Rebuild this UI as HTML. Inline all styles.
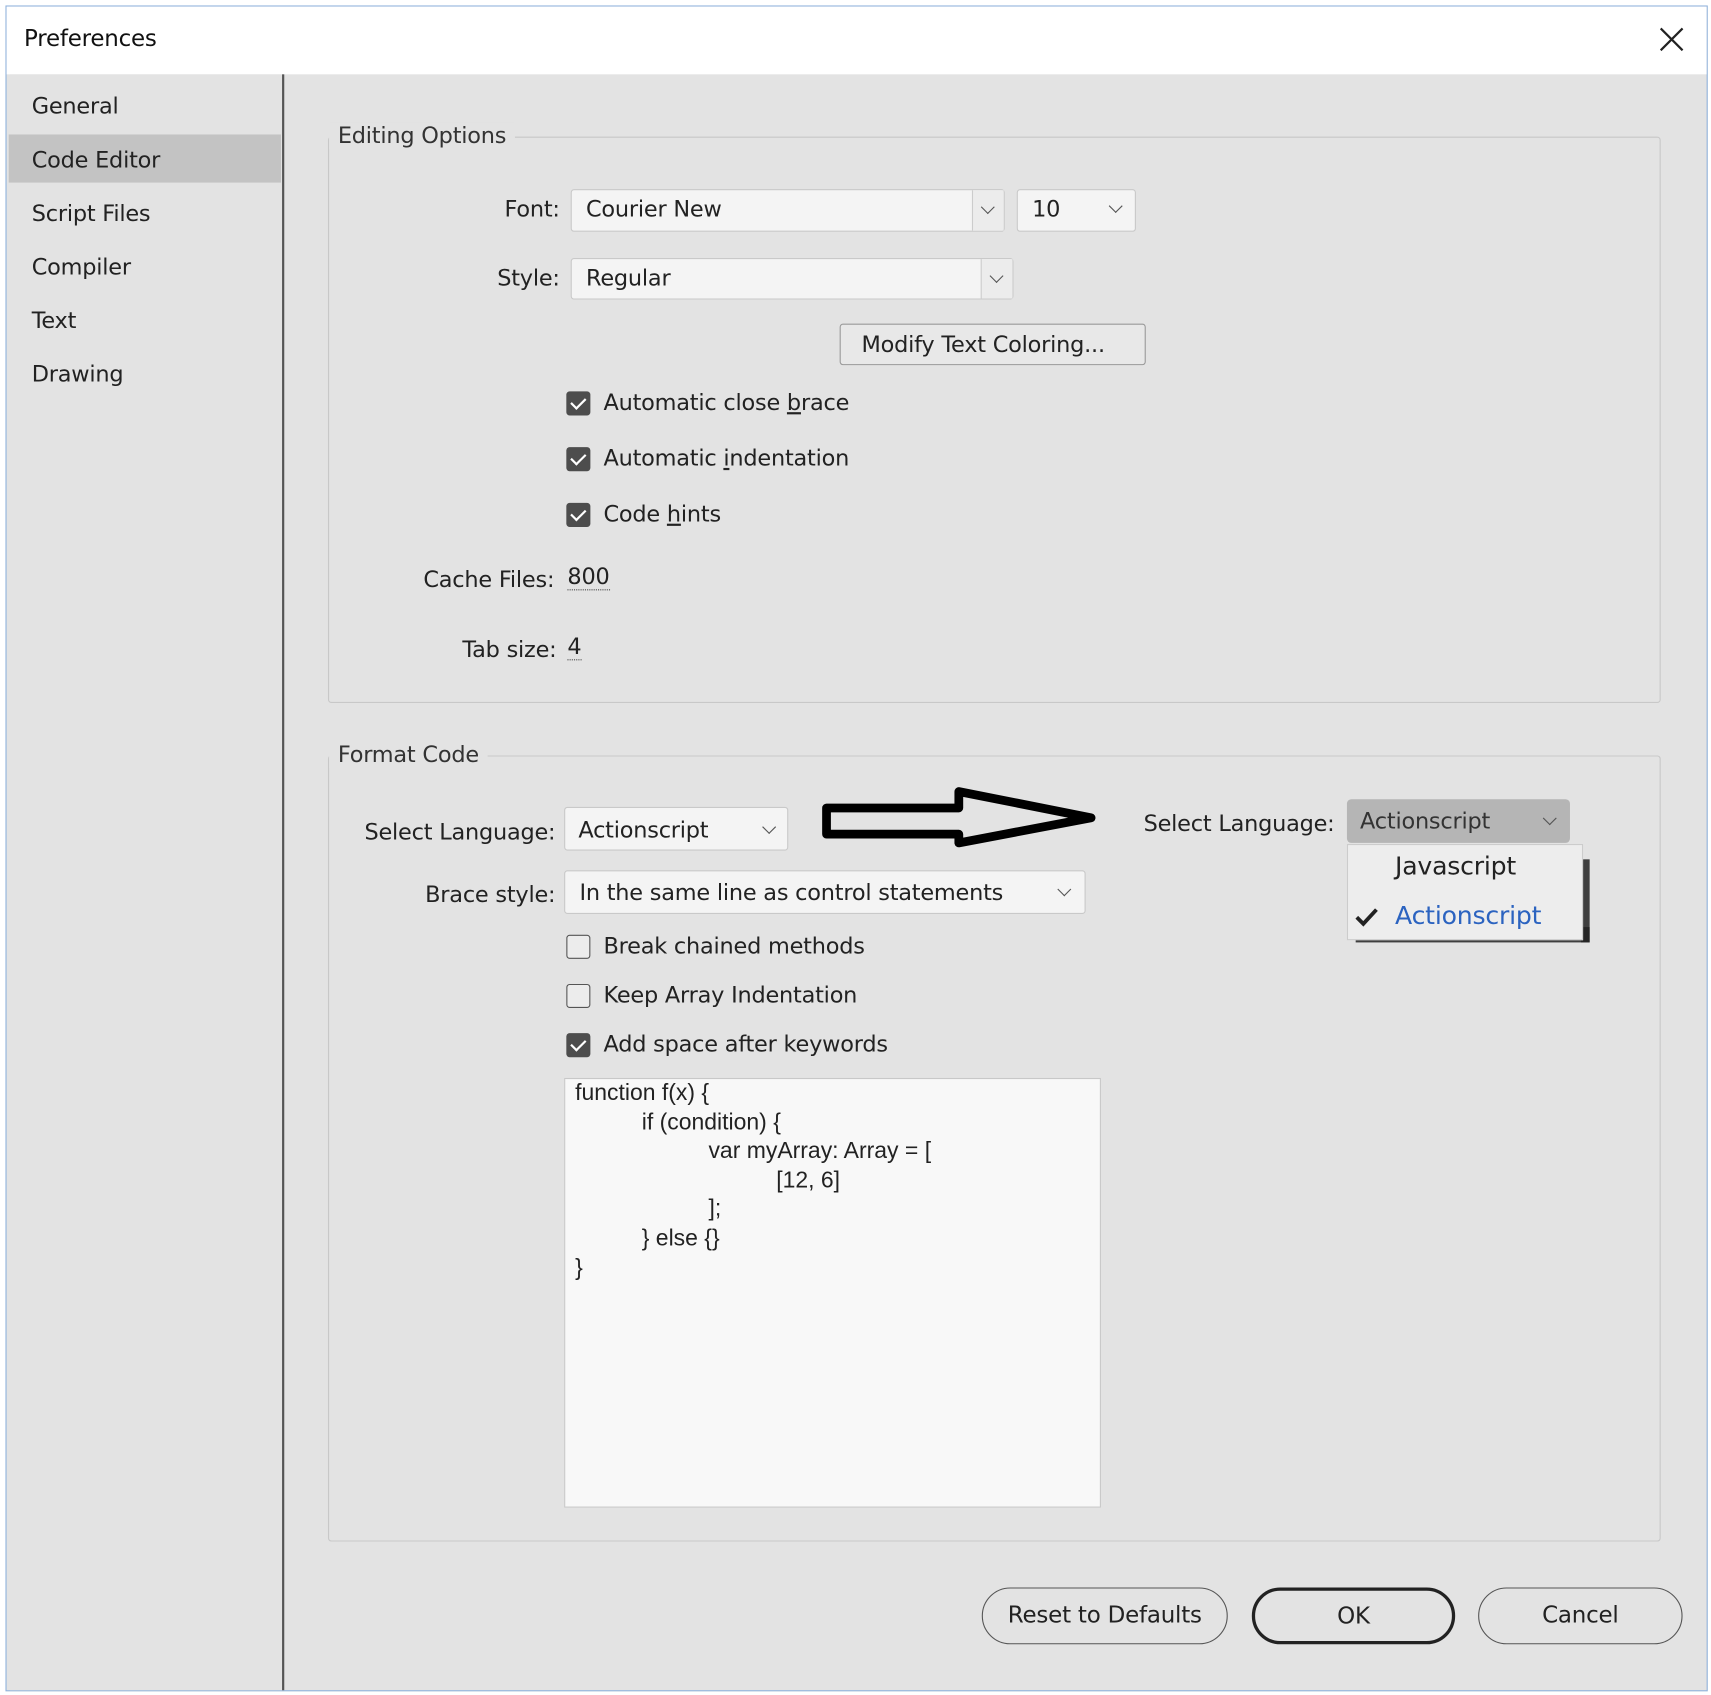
<!DOCTYPE html>
<html><head><meta charset="utf-8"><style>
html,body{margin:0;padding:0;background:#fff;width:1711px;height:1695px;overflow:hidden}
#w{position:absolute;left:0;top:0;width:1565px;height:1550px;transform:scale(1.09329);transform-origin:0 0;font-family:"DejaVu Sans","Liberation Sans",sans-serif;color:#222;font-size:20.5px;letter-spacing:-0.2px}
.a{position:absolute;white-space:nowrap}
.win{position:absolute;left:5px;top:5px;width:1555px;height:1540px;border:1px solid #8fb2dc;background:#e3e3e3}
.title{position:absolute;left:0;top:0;width:1555px;height:62px;background:#fff}
.side{position:absolute;left:3px;top:62px;width:249px;height:1478px;background:#e3e3e3;border-right:2px solid #555}
.grp{position:absolute;border:1px solid #c8c8c8;border-radius:3px}
.glab{position:absolute;background:#e3e3e3;padding:0 8px;color:#333}
.cb{position:absolute;background:#f4f4f4;border:1px solid #c9c9c9;border-radius:3px;box-sizing:border-box}
.dd{position:absolute;top:0;right:0;height:100%;width:28px;border-left:1px solid #ccc;background:#ececec}
.chev{position:absolute;width:8px;height:8px;border-right:1.6px solid #555;border-bottom:1.6px solid #555;transform:rotate(45deg)}
.chk{position:absolute;width:22px;height:22px;border-radius:3px;box-sizing:border-box}
.on{background:#4d4d4d}
.on::after{content:"";position:absolute;left:7px;top:3px;width:6px;height:11px;border-right:2.5px solid #fff;border-bottom:2.5px solid #fff;transform:rotate(45deg)}
.off{border:1.5px solid #555;background:#ececec}
.btn{position:absolute;border:1.5px solid #555;border-radius:26px;box-sizing:border-box;text-align:center;line-height:48px;font-size:21px}
u{text-decoration:underline}
</style></head><body><div id="w">
<div class="win">
 <div class="title"></div>
 <div class="side"></div>
</div>
<div class="a" style="left:22px;top:23px;font-size:21px;color:#111">Preferences</div>
<svg class="a" style="left:1517px;top:24px" width="24" height="24"><path d="M2 2L22 22M22 2L2 22" stroke="#222" stroke-width="2"/></svg>
<div class="a" style="left:8px;top:123px;width:249px;height:44px;background:#c3c3c3"></div>
<div class="a" style="left:29px;top:85px">General</div>
<div class="a" style="left:29px;top:134px">Code Editor</div>
<div class="a" style="left:29px;top:183px">Script Files</div>
<div class="a" style="left:29px;top:232px">Compiler</div>
<div class="a" style="left:29px;top:281px">Text</div>
<div class="a" style="left:29px;top:330px">Drawing</div>

<div class="grp" style="left:300px;top:125px;width:1217px;height:516px"></div>
<div class="glab" style="left:301px;top:112px">Editing Options</div>
<div class="a" style="left:400px;top:179px;width:112px;text-align:right">Font:</div>
<div class="cb" style="left:522px;top:173px;width:397px;height:39px"><div class="dd"><div class="chev" style="left:9px;top:11px"></div></div></div>
<div class="a" style="left:536px;top:179px">Courier New</div>
<div class="cb" style="left:930px;top:173px;width:109px;height:39px"></div><div class="chev a" style="left:1016px;top:184px"></div>
<div class="a" style="left:944px;top:179px">10</div>
<div class="a" style="left:400px;top:242px;width:112px;text-align:right">Style:</div>
<div class="cb" style="left:522px;top:236px;width:405px;height:38px"><div class="dd"><div class="chev" style="left:9px;top:11px"></div></div></div>
<div class="a" style="left:536px;top:242px">Regular</div>
<div class="cb" style="left:768px;top:296px;width:280px;height:38px;background:#e8e8e8;border-color:#999"></div>
<div class="a" style="left:788px;top:303px">Modify Text Coloring...</div>
<div class="chk on" style="left:518px;top:358px"></div><div class="a" style="left:552px;top:356px">Automatic close <u>b</u>race</div>
<div class="chk on" style="left:518px;top:409px"></div><div class="a" style="left:552px;top:407px">Automatic <u>i</u>ndentation</div>
<div class="chk on" style="left:518px;top:460px"></div><div class="a" style="left:552px;top:458px">Code <u>h</u>ints</div>
<div class="a" style="left:300px;top:518px;width:207px;text-align:right">Cache Files:</div>
<div class="a" style="left:519px;top:515px;border-bottom:1.5px dotted #444">800</div>
<div class="a" style="left:300px;top:582px;width:209px;text-align:right">Tab size:</div>
<div class="a" style="left:519px;top:579px;border-bottom:1.5px dotted #444">4</div>

<div class="grp" style="left:300px;top:691px;width:1217px;height:717px"></div>
<div class="glab" style="left:301px;top:678px">Format Code</div>
<div class="a" style="left:300px;top:749px;width:208px;text-align:right">Select Language:</div>
<div class="cb" style="left:516px;top:738px;width:205px;height:40px"></div><div class="chev a" style="left:699px;top:752px"></div>
<div class="a" style="left:529px;top:747px">Actionscript</div>
<svg class="a" style="left:0;top:0" width="1100" height="800"><polygon points="756,739 877,739 877,724 998,748 877,771 877,763 756,763" fill="#e3e3e3" stroke="#000" stroke-width="8" stroke-linejoin="round"/></svg>
<div class="a" style="left:1046px;top:741px">Select Language:</div>
<div class="a" style="left:1232px;top:731px;width:204px;height:40px;background:#b5b5b5;border-radius:4px"></div><div class="chev a" style="left:1413px;top:744px"></div>
<div class="a" style="left:1244px;top:739px;color:#333">Actionscript</div>
<div class="a" style="left:1240px;top:848px;width:214px;height:14px;background:#222;opacity:0.85"></div>
<div class="a" style="left:1446px;top:786px;width:8px;height:76px;background:#222;opacity:0.85"></div>
<div class="a" style="left:1232px;top:772px;width:216px;height:88px;background:#ededed;border:1px solid #ccc;box-sizing:border-box"></div>
<div class="a" style="left:1276px;top:780px;font-size:23px">Javascript</div>
<div class="a" style="left:1276px;top:825px;font-size:23px;color:#2b63c0">Actionscript</div>
<svg class="a" style="left:1238px;top:828px" width="24" height="22"><path d="M3 11L9 17L21 4" stroke="#222" stroke-width="3.5" fill="none"/></svg>
<div class="a" style="left:300px;top:806px;width:208px;text-align:right">Brace style:</div>
<div class="cb" style="left:516px;top:796px;width:477px;height:40px"></div><div class="chev a" style="left:969px;top:809px"></div>
<div class="a" style="left:530px;top:804px">In the same line as control statements</div>
<div class="chk off" style="left:518px;top:855px"></div><div class="a" style="left:552px;top:853px">Break chained methods</div>
<div class="chk off" style="left:518px;top:900px"></div><div class="a" style="left:552px;top:898px">Keep Array Indentation</div>
<div class="chk on" style="left:518px;top:945px"></div><div class="a" style="left:552px;top:943px">Add space after keywords</div>
<div class="a" style="left:516px;top:986px;width:491px;height:393px;background:#f8f8f8;border:1px solid #c8c8c8;box-sizing:border-box"></div>
<div class="a" style="left:526px;top:987px;font-family:'Liberation Sans',sans-serif;font-size:21px;line-height:26.6px;letter-spacing:0;white-space:pre">function f(x) {
<span style="padding-left:61px">if (condition) {</span>
<span style="padding-left:122px">var myArray: Array = [</span>
<span style="padding-left:184px">[12, 6]</span>
<span style="padding-left:122px">];</span>
<span style="padding-left:61px">} else {}</span>
}</div>

<div class="btn" style="left:898px;top:1452px;width:225px;height:52px">Reset to Defaults</div>
<div class="btn" style="left:1145px;top:1452px;width:186px;height:52px;border:3px solid #222;line-height:46px">OK</div>
<div class="btn" style="left:1352px;top:1452px;width:187px;height:52px">Cancel</div>
</div></body></html>
